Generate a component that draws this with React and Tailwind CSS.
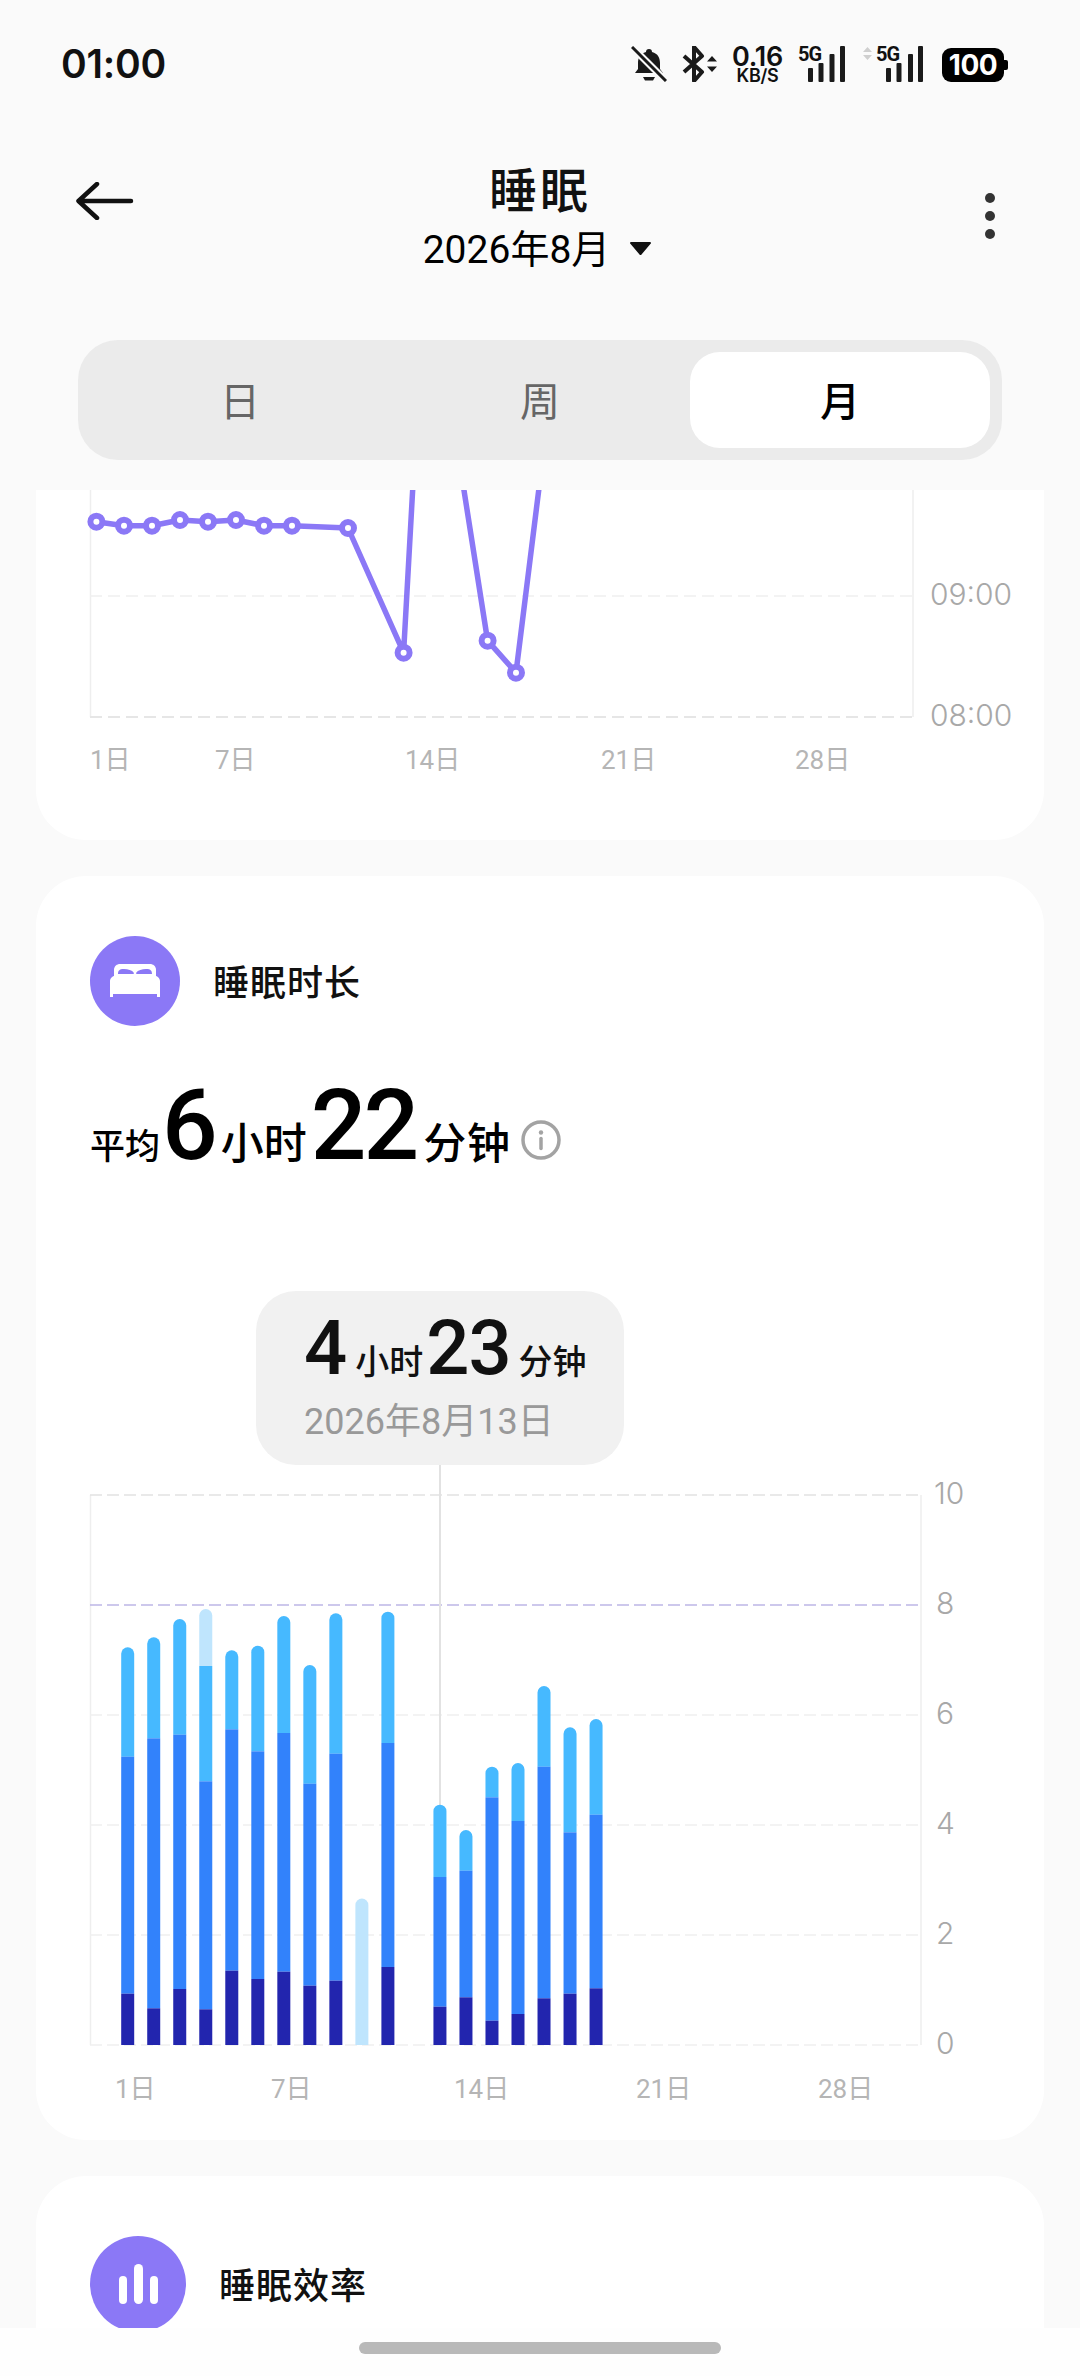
import React from "react";

const purple = "#8b78f6";

const firstLine = [
  [96.4, 521.7], [124, 525.7], [152, 525.7], [180, 520], [208, 521.7],
  [236, 520], [264, 525.7], [292, 525.7], [348, 528], [403.6, 652.7],
];
const secondLine = [[487.6, 640.7], [516, 672.7]];

// [top, sky/blue, blue/navy] in page y, null = no record
const bars = [
  [1647.3, 1756.7, 1993.7],
  [1637.3, 1738.3, 2008.3],
  [1619, 1734.7, 1989],
  [1666, 1781.3, 2009.3, 1609],
  [1650.3, 1729.3, 1970.7],
  [1645.7, 1751.3, 1979],
  [1616, 1733, 1971.7],
  [1665, 1783.7, 1985.7],
  [1613.3, 1753.7, 1980.7],
  "light",
  [1611.7, 1743, 1967],
  null,
  [1804.7, 1877, 2006.7],
  [1830, 1870.7, 1997.3],
  [1766.7, 1797.3, 2020.7],
  [1763, 1821, 2014],
  [1686, 1766.7, 1998.3],
  [1727.3, 1832.3, 1993.7],
  [1719, 1814.7, 1988.3],
];

const StatusBar = () => (
  <div className="h-[100px] pt-[46px] pl-[61px] pr-[72px] flex justify-between items-start text-[#111]">
    <span className="text-[39px] leading-[36px] font-semibold tracking-[-0.2px] font-[Inter,sans-serif]">01:00</span>
    <div className="flex items-start h-[36px]">
      {/* bell off */}
      <svg width="36" height="36" viewBox="0 0 36 36" fill="#1a1a1a">
        <path d="M18 3a3 3 0 0 1 3 3c6 1.500 8 6 8 11v6l3 4H4l3-4v-6c0-5 2-9.500 8-11a3 3 0 0 1 3-3z" />
        <path d="M12 31h12l-2 3.500h-8z" />
        <path d="M1 1 35 35" stroke="#fafafa" strokeWidth="7" />
        <path d="M1 1 35 35" stroke="#1a1a1a" strokeWidth="3" />
      </svg>
      {/* bluetooth */}
      <svg className="ml-[15px]" width="36" height="36" viewBox="0 0 36 36" fill="none">
        <path d="M2 10 20 26 12 35V1l8 9L2 26" stroke="#1a1a1a" strokeWidth="4" strokeLinejoin="round" />
        <path d="M25 15.500 30 10l5 5.500zM25 20.500 30 26l5-5.500z" fill="#1a1a1a" />
      </svg>
      <div className="ml-[13px] w-[53px] flex flex-col items-center font-semibold font-[Inter,sans-serif]">
        <span className="text-[27px] leading-[22px] tracking-[-0.3px] whitespace-nowrap">0.16</span>
        <span className="text-[18px] leading-[14px] mt-[1px] tracking-[-0.3px]">KB/S</span>
      </div>
      {/* sim 1 */}
      <div className="ml-[14px] relative w-[48px] h-[36px]">
        <span className="absolute left-0 -top-[1px] text-[20px] leading-[18px] font-bold tracking-[-1px]">5G</span>
        <svg className="absolute left-0 top-0" width="48" height="36" viewBox="0 0 48 36" fill="#1a1a1a">
          <rect x="10" y="22" width="5" height="14" rx="1" />
          <rect x="20.500" y="17" width="5" height="19" rx="1" />
          <rect x="31.500" y="8" width="5" height="28" rx="1" />
          <rect x="42" y="0" width="5" height="36" rx="1" />
        </svg>
      </div>
      {/* sim 2 */}
      <div className="ml-[17px] relative w-[61px] h-[36px]">
        <svg className="absolute left-0 top-0" width="61" height="36" viewBox="0 0 61 36" fill="#1a1a1a">
          <path d="M0 6 4.500 1 9 6zM0 9l4.500 5L9 9z" fill="#cfcfcf" />
          <rect x="23" y="22" width="5" height="14" rx="1" />
          <rect x="33.500" y="17" width="5" height="19" rx="1" />
          <rect x="45" y="8" width="5" height="28" rx="1" />
          <rect x="55" y="0" width="5" height="36" rx="1" />
        </svg>
        <span className="absolute left-[13px] -top-[1px] text-[20px] leading-[18px] font-bold tracking-[-1px]">5G</span>
      </div>
      {/* battery */}
      <div className="ml-[18px] mt-[2px] flex items-center">
        <div className="w-[62px] h-[34px] rounded-[9px] bg-black text-white text-[28px] leading-[34px] font-bold text-center tracking-[-0.5px] font-[Inter,sans-serif]">100</div>
        <div className="w-[4px] h-[10px] rounded-r-[2px] bg-black" />
      </div>
    </div>
  </div>
);

const Header = () => (
  <div className="h-[240px] grid grid-cols-[1fr_auto_1fr] items-start">
    <div className="pl-[76px] pt-[82px]">
      <svg width="58" height="38" viewBox="0 0 58 38" fill="none" stroke="#111" strokeWidth="4.500" strokeLinecap="round" strokeLinejoin="round">
        <path d="M55 19H3M21 2 2.500 19 21 36" />
      </svg>
    </div>
    <div className="flex flex-col items-center pt-[62px]">
      <div className="text-[48px] leading-[60px] font-medium tracking-[3px] text-[#111]">睡眠</div>
      <div className="mt-[3px] pr-[6px] flex items-center text-[39px] leading-[50px] text-black">
        <span>2026年8月</span>
        <svg className="ml-[20px] mb-[3px]" width="21" height="13" viewBox="0 0 21 13" fill="#111">
          <path d="M1 0h19a1 1 0 0 1 .8 1.600L11.500 12.500a1.200 1.200 0 0 1-2 0L.2 1.600A1 1 0 0 1 1 0z" />
        </svg>
      </div>
    </div>
    <div className="flex flex-col items-end gap-[8px] pr-[85px] pt-[93px]">
      <span className="w-[10px] h-[10px] rounded-full bg-[#333]" />
      <span className="w-[10px] h-[10px] rounded-full bg-[#333]" />
      <span className="w-[10px] h-[10px] rounded-full bg-[#333]" />
    </div>
  </div>
);

const Tabs = () => (
  <div className="mx-[78px] h-[120px] p-[12px] rounded-[40px] bg-[#ebebeb] grid grid-cols-3 text-[40px] text-center leading-[56px]">
    <div className="pt-[23px] text-[#666]">日</div>
    <div className="pt-[23px] text-[#666]">周</div>
    <div className="pt-[23px] bg-white rounded-[30px] text-black font-medium">月</div>
  </div>
);

const WakeChart = () => (
  <svg className="block" width="1008" height="350" viewBox="36 490 1008 350" fontSize="26" fill="#b5b5b5">
    <path d="M90.500 490V717M913 490V717" stroke="#eeeeee" strokeWidth="1.500" />
    <path d="M90 596H913" stroke="#efefef" strokeWidth="1.500" strokeDasharray="12 6" />
    <path d="M90 717H913" stroke="#e6e6e6" strokeWidth="2" strokeDasharray="12 6" />
    <g fontFamily="Inter, sans-serif" fontSize="30" fontWeight="300" fill="#a8a8a8">
      <text x="930" y="605">09:00</text>
      <text x="930" y="726">08:00</text>
    </g>
    <text x="90" y="769">1日</text>
    <text x="215" y="769">7日</text>
    <text x="405" y="769">14日</text>
    <text x="601" y="769">21日</text>
    <text x="795" y="769">28日</text>
    <g fill="none" stroke={purple} strokeWidth="5.500" strokeLinejoin="round">
      <polyline points={[...firstLine, [413, 484]].join(" ")} />
      <polyline points={[[463, 484], ...secondLine, [539.500, 484]].join(" ")} />
    </g>
    {[...firstLine, ...secondLine].map(([x, y]) => (
      <circle key={x} cx={x} cy={y} r="6" fill="#fff" stroke={purple} strokeWidth="6" />
    ))}
  </svg>
);

const Bar = ({ data, i }) => {
  if (!data) return null;
  const x = 121.2 + i * 26.02;
  const base = 2045;
  if (data === "light") {
    return <path d={`M${x} ${base}V1905a6.500 6.500 0 0 1 13 0V${base}z`} fill="#bfe5fd" />;
  }
  const [top, mid, low, lightTop] = data;
  return (
    <g>
      {lightTop && <path d={`M${x} ${top}V${lightTop + 6.5}a6.500 6.500 0 0 1 13 0V${top}z`} fill="#bfe5fd" />}
      {lightTop ? (
        <rect x={x} y={top} width="13" height={mid - top} fill="#46b9ff" />
      ) : (
        <path d={`M${x} ${mid}V${top + 6.5}a6.500 6.500 0 0 1 13 0V${mid}z`} fill="#46b9ff" />
      )}
      <rect x={x} y={mid} width="13" height={low - mid} fill="#3282fb" />
      <rect x={x} y={low} width="13" height={base - low} fill="#2225ae" />
    </g>
  );
};

const DurationChart = () => (
  <svg className="block" width="1008" height="675" viewBox="36 1465 1008 675" fontSize="26" fill="#b5b5b5">
    <path d="M90.500 1495V2045M921 1495V2045" stroke="#eeeeee" strokeWidth="1.500" />
    {[1495, 1715, 1825, 1935, 2045].map((y) => (
      <path key={y} d={`M90 ${y}H921`} stroke={y === 1495 ? "#e2e2e2" : "#efefef"} strokeWidth="1.500" strokeDasharray="12 5" />
    ))}
    <path d="M90 1605H921" stroke="#bdb7e6" strokeWidth="1.500" strokeDasharray="12 5" />
    <path d="M440 1465V1810" stroke="#e2e2e2" strokeWidth="2" />
    {bars.map((b, i) => (
      <Bar key={i} data={b} i={i} />
    ))}
    <g fontFamily="Inter, sans-serif" fontSize="30" fontWeight="300" fill="#a8a8a8">
      {[["10", 1495], ["8", 1605], ["6", 1715], ["4", 1825], ["2", 1935], ["0", 2045]].map(([t, y]) => (
        <text key={t} x={t === "10" ? 934 : 936} y={y + 9}>{t}</text>
      ))}
    </g>
    <text x="115" y="2098">1日</text>
    <text x="271" y="2098">7日</text>
    <text x="454" y="2098">14日</text>
    <text x="636" y="2098">21日</text>
    <text x="818" y="2098">28日</text>
  </svg>
);

const BedIcon = () => (
  <div className="w-[90px] h-[90px] rounded-full bg-[#8b78f6] flex items-center justify-center">
    <svg width="50" height="36" viewBox="0 0 50 36" fill="#fff">
      <path d="M4 13V7c0-4 3-6 6-6h30c3 0 6 2 6 6v6z" />
      <path d="M8 11c0-3 1-5 6-5 4 0 8 1 10 4 0 1-1 1-2 1zM26 10c2-3 6-4 10-4 5 0 6 2 6 5H28c-1 0-2 0-2-1z" fill="#8b78f6" />
      <path d="M0 18c0-3 3-5 6-6 6-1 32-1 38 0 3 1 6 3 6 6v16h-3v-3H3v3H0z" />
    </svg>
  </div>
);

const App = () => {
  return (
    <div className="w-[1080px] h-[2376px] flex flex-col overflow-hidden bg-[#fafafa] font-[Roboto,'Noto_Sans_CJK_SC',sans-serif]">
      <StatusBar />
      <Header />
      <Tabs />

      <main className="mt-[30px] flex-1 overflow-hidden px-[36px] flex flex-col gap-[36px]">
        {/* card scrolled partly under the tabs */}
        <div className="shrink-0 h-[350px] bg-white rounded-b-[50px] overflow-hidden">
          <WakeChart />
        </div>

        <div className="shrink-0 h-[1264px] bg-white rounded-[50px] overflow-hidden">
          <div className="pt-[60px] pl-[54px] flex items-center gap-[33px]">
            <BedIcon />
            <span className="mt-[5px] text-[36px] font-medium tracking-[1px] text-[#111]">睡眠时长</span>
          </div>

          <div className="mt-[52px] pl-[54px] h-[96px] flex items-baseline text-black">
            <span className="text-[35px] font-medium">平均</span>
            <span className="ml-[2px] text-[98px] leading-[96px] font-medium tracking-[-3px]">6</span>
            <span className="ml-[6px] text-[43px] font-medium">小时</span>
            <span className="ml-[4px] text-[98px] leading-[96px] font-medium tracking-[-3px]">22</span>
            <span className="ml-[7px] text-[43px] font-medium tracking-[1px]">分钟</span>
            <svg className="ml-[10px] self-center mt-[28px]" width="40" height="40" viewBox="0 0 40 40" fill="none" stroke="#a3a3a3" strokeWidth="3.500">
              <circle cx="20" cy="20" r="18" />
              <path d="M20 18.500v10" strokeWidth="3.500" strokeLinecap="round" />
              <circle cx="20" cy="12.500" r="2.200" fill="#a3a3a3" stroke="none" />
            </svg>
          </div>

          <div className="mt-[117px] ml-[220px] w-[368px] h-[174px] pt-[20px] pl-[48px] rounded-[40px] bg-[#f1f1f1]">
            <div className="flex items-baseline text-[#111]">
              <span className="text-[76px] leading-[74px] font-medium tracking-[-1px]">4</span>
              <span className="ml-[9px] text-[34px] font-medium">小时</span>
              <span className="ml-[3px] text-[76px] leading-[74px] font-medium tracking-[-1px]">23</span>
              <span className="ml-[8px] text-[34px] font-medium">分钟</span>
            </div>
            <div className="mt-[10px] text-[36px] leading-[48px] text-[#999]">2026年8月13日</div>
          </div>
          <DurationChart />
        </div>

        <div className="shrink-0 h-[400px] bg-white rounded-t-[50px] pt-[60px] pl-[54px] flex items-start gap-[33px]">
          <div className="w-[96px] h-[96px] rounded-full bg-[#8b78f6] flex items-center justify-center">
            <div className="flex items-end gap-[7px] h-[40px]">
              <span className="w-[8px] h-[28px] rounded-full bg-white" />
              <span className="w-[9px] h-[40px] rounded-full bg-white" />
              <span className="w-[8px] h-[28px] rounded-full bg-white" />
            </div>
          </div>
          <span className="mt-[24px] text-[36px] font-medium tracking-[1px] text-[#111]">睡眠效率</span>
        </div>
      </main>

      <div className="h-[48px] pt-[14px] bg-[#fefefe] flex justify-center">
        <div className="w-[362px] h-[12px] rounded-full bg-[#b9b9b9]" />
      </div>
    </div>
  );
};

export default App;
